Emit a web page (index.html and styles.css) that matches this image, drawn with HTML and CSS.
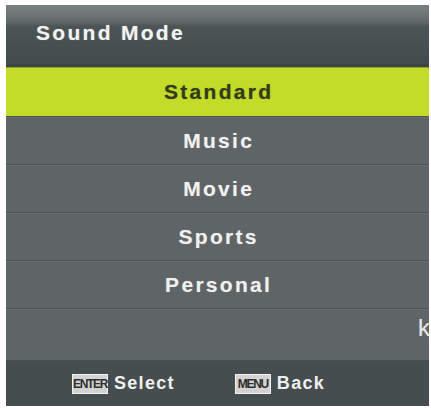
FILE: index.html
```html
<!DOCTYPE html>
<html>
<head>
<meta charset="utf-8">
<link rel="stylesheet" href="styles.css">
</head>
<body>
<div class="panel">
  <div class="header"><span class="title">Sound Mode</span></div>
  <div class="row selected"><span>Standard</span></div>
  <div class="row"><span>Music</span></div>
  <div class="row"><span>Movie</span></div>
  <div class="row"><span>Sports</span></div>
  <div class="row"><span>Personal</span></div>
  <div class="row empty"><span class="stray">k</span></div>
  <div class="footer">
    <div class="hint"><span class="key">ENTER</span><span class="label">Select</span></div>
    <div class="hint"><span class="key">MENU</span><span class="label">Back</span></div>
  </div>
</div>
</body>
</html>
```

FILE: styles.css
```css
html, body {
  margin: 0;
  padding: 0;
  background: #ffffff;
}
body {
  width: 431px;
  height: 410px;
  overflow: hidden;
  font-family: "Liberation Sans", Arial, sans-serif;
}
.panel {
  margin: 5px 2px 0 6px;
  width: 423px;
  display: flex;
  flex-direction: column;
  background: #5f6566;
}
.header {
  height: 59px;
  border-bottom: 3px solid #3c4445;
  background: linear-gradient(to bottom, #7b7f80 0px, #6c7172 12px, #5f6566 18px, #4c5556 21px, #475051 40px, #434c4d 100%);
  display: flex;
  align-items: center;
  padding-left: 30px;
}
.title {
  color: #f2f2f2;
  font-weight: bold;
  font-size: 21px;
  letter-spacing: 2.3px;
  margin-top: -4px;
  text-shadow: 0 0 1px rgba(255,255,255,0.4);
}
.row {
  height: 47px;
  border-top: 1px solid #4d5354;
  display: flex;
  align-items: center;
  justify-content: center;
  color: #f0f0f0;
  font-weight: bold;
  font-size: 21px;
  letter-spacing: 2.3px;
  text-indent: 2.3px;
  box-shadow: inset 0 1px 0 #6a7071;
  text-shadow: 0 0 1px rgba(255,255,255,0.35);
}
.row.selected {
  height: 48px;
  border-top: 1px solid #8fa024;
  background: #c3db29;
  color: #343a1c;
  box-shadow: none;
  text-shadow: 0 0 1px rgba(52,58,28,0.5);
}
.row.empty {
  height: 51px;
  justify-content: flex-end;
  align-items: flex-start;
  overflow: hidden;
}
.stray {
  font-weight: normal;
  font-size: 24px;
  letter-spacing: 0;
  text-indent: 0;
  color: #e6e6e6;
  margin-top: 7px;
  margin-right: -1px;
  line-height: 1;
}
.footer {
  height: 45px;
  border-top: 1px solid #4a5051;
  background: #464d4e;
  display: flex;
  align-items: center;
  padding-left: 66px;
  gap: 60px;
}
.hint {
  display: flex;
  align-items: center;
  gap: 6px;
}
.key {
  width: 34px;
  height: 18px;
  border: 1px solid #f2f2f2;
  background: #d2d2d2;
  color: #2e2e2e;
  font-size: 12px;
  letter-spacing: -1.3px;
  display: flex;
  align-items: center;
  justify-content: center;
  font-weight: bold;
}
.label {
  color: #f0f0f0;
  font-weight: bold;
  font-size: 18px;
  letter-spacing: 1.3px;
}
```
